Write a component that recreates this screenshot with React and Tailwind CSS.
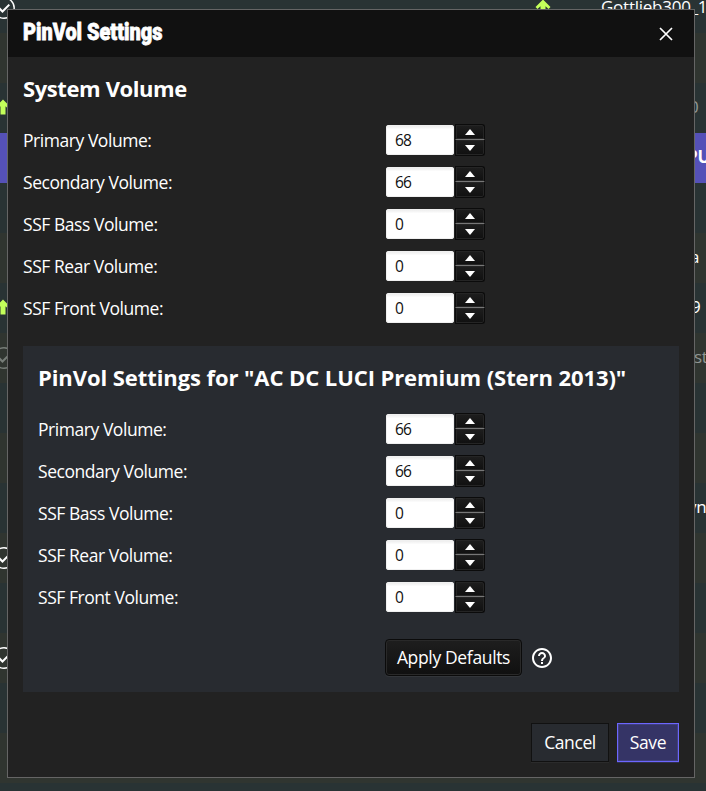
import React from 'react';

const UI = "font-['Open_Sans','Noto_Sans',sans-serif]";

function CheckIcon({ dim }) {
  return (
    <svg viewBox="0 0 24 24" className={`-mt-px h-6 w-6 shrink-0 -ml-2 ${dim ? 'text-[#777d78]' : 'text-white'}`} fill="none" stroke="currentColor">
      <circle cx="12" cy="12" r="10.2" strokeWidth="1.4" />
      <path d="M7 12l3.5 3.5L17.3 8.6" strokeWidth="2" />
    </svg>
  );
}

function ArrowIcon() {
  return (
    <svg viewBox="0 0 16 16" className="-mt-[2px] h-4 w-4 shrink-0 text-[#c4ff5a]" fill="currentColor">
      <path d="M8 0.5L15.5 8 13.5 10 10.5 7.2V15.5H5.5V7.2L2.5 10 0.5 8z" />
    </svg>
  );
}

const rows = [
  { bg: 'bg-[#293334]', icon: 'check', text: 'Gottlieb300_1', indent: 'pl-[601px]', arrow: true },
  { bg: 'bg-[#303530]' },
  { bg: 'bg-[#293334]', icon: 'arrow', text: '0', indent: 'pl-[689px]', dim: true },
  { bg: 'bg-[#5551b8]', text: 'PU', indent: 'pl-[687px]', bold: true },
  { bg: 'bg-[#293334]' },
  { bg: 'bg-[#303530]', text: 'a', indent: 'pl-[690px]' },
  { bg: 'bg-[#293334]', icon: 'arrow', text: '9', indent: 'pl-[691px]' },
  { bg: 'bg-[#303530]', icon: 'check', dim: true, text: 'st', indent: 'pl-[694px]' },
  { bg: 'bg-[#293334]' },
  { bg: 'bg-[#303530]' },
  { bg: 'bg-[#293334]', text: 'yn', indent: 'pl-[688px]' },
  { bg: 'bg-[#303530]', icon: 'check' },
  { bg: 'bg-[#293334]' },
  { bg: 'bg-[#303530]', icon: 'check' },
  { bg: 'bg-[#293334]' },
  { bg: 'bg-[#303530]' },
  { bg: 'bg-[#293334]' },
];

function TableRow({ row }) {
  return (
    <div className={`grid h-[50px] shrink-0 items-center overflow-hidden ${row.bg}`}>
      <div className="col-start-1 row-start-1 flex items-center">
        {row.icon === 'check' && <CheckIcon dim={row.dim} />}
        {row.icon === 'arrow' && <span className="-ml-[5px]"><ArrowIcon /></span>}
        {row.arrow && <span className="ml-[519px]"><ArrowIcon /></span>}
      </div>
      {row.text && (
        <span className={`col-start-1 row-start-1 mb-1 whitespace-nowrap text-[17px] leading-none tracking-[-0.25px] ${row.indent} ${row.bold ? 'font-bold' : ''} ${row.dim ? 'text-[#929794]' : 'text-white'}`}>
          {row.text}
        </span>
      )}
    </div>
  );
}

function StepButton({ down }) {
  return (
    <button className={`flex h-4 w-[30px] items-center justify-center border border-[#0b0b0b] bg-linear-to-b from-[#1e1e1e] to-[#101010] shadow-[inset_0_0_0_1px_#252525] ${down ? 'rounded-br-[3px] border-t-0' : 'rounded-tr-[3px] border-b-[#777]'}`}>
      <svg viewBox="0 0 10 6" className="h-[6px] w-[10px]" fill="#fff">
        {down ? <path d="M0 0H10L5 6z" /> : <path d="M5 0L10 6H0z" />}
      </svg>
    </button>
  );
}

function Spinner({ value }) {
  return (
    <div className="flex h-8 w-[99px] items-center">
      <div className="flex h-[30px] w-[68px] shrink-0 items-center rounded-[3px] bg-linear-to-b from-[#e9e9e9] via-white via-15% to-white pt-[2px] pl-[9px] text-[15.5px] tracking-[-0.9px] text-[#111] shadow-[inset_0_0_0_1px_#f0f0f0]">
        {value}
      </div>
      <div className="ml-px flex flex-col">
        <StepButton />
        <StepButton down />
      </div>
    </div>
  );
}

const names = ['Primary Volume:', 'Secondary Volume:', 'SSF Bass Volume:', 'SSF Rear Volume:', 'SSF Front Volume:'];

function Fields({ values, labelWidth }) {
  return names.map((name, i) => (
    <div key={name} className="flex h-[42px] items-center">
      <label className={`shrink-0 text-[17.5px] tracking-[-0.45px] ${labelWidth}`}>{name}</label>
      <Spinner value={values[i]} />
    </div>
  ));
}

function Dialog() {
  return (
    <section className="absolute left-[7px] top-[9px] flex h-[769px] w-[688px] flex-col border border-[#656565] bg-[#222] text-white">
      <header className="flex h-[47px] shrink-0 items-center justify-between bg-[#111] pl-[15px] pr-[21px]">
        <h1 className="-mt-[3px] w-[180px] origin-left scale-x-[.83] whitespace-nowrap font-[Roboto,sans-serif] text-[24px] font-black leading-none [-webkit-text-stroke:0.8px_white]">PinVol Settings</h1>
        <svg viewBox="0 0 14 14" className="h-[14px] w-[14px]" stroke="#fff" strokeWidth="1.7"><path d="M1 1l12 12M13 1L1 13" /></svg>
      </header>
      <main className="flex flex-1 flex-col px-[15px]">
        <h2 className="mb-[15px] mt-[15px] whitespace-nowrap text-[22px] font-bold leading-[32px] tracking-[-0.4px]">System Volume</h2>
        <Fields values={[68, 66, 0, 0, 0]} labelWidth="w-[363px]" />
        <div className="mt-[17px] h-[346px] w-[656px] shrink-0 bg-[#282b30] pl-[15px]">
          <h2 className="mb-[15px] mt-[15px] whitespace-nowrap text-[22px] font-bold leading-[32px] tracking-[-0.08px]">PinVol Settings for "AC DC LUCI Premium (Stern 2013)"</h2>
          <Fields values={[66, 66, 0, 0, 0]} labelWidth="w-[348px]" />
          <div className="ml-[347px] mt-[21px] flex items-center gap-[8px]">
            <button className="h-[37px] w-[137px] whitespace-nowrap rounded-[4px] border border-[#0b0b0b] bg-linear-to-b from-[#1e1e1e] to-[#101010] text-[17.5px] leading-none tracking-[-0.35px] shadow-[inset_0_0_0_1px_#292929,0_1px_0_#33363a]">Apply Defaults</button>
            <svg viewBox="0 0 24 24" className="-ml-[0.5px] h-6 w-6" fill="#fff">
              <path d="M11 18h2v-2h-2v2zm1-16C6.48 2 2 6.48 2 12s4.48 10 10 10 10-4.480 10-10S17.520 2 12 2zm0 18c-4.410 0-8-3.590-8-8s3.590-8 8-8 8 3.590 8 8-3.590 8-8 8zm0-14c-2.210 0-4 1.790-4 4h2c0-1.100.900-2 2-2s2 .900 2 2c0 2-3 1.750-3 5h2c0-2.250 3-2.500 3-5 0-2.210-1.790-4-4-4z" />
            </svg>
          </div>
        </div>
        <footer className="mt-[31px] flex justify-end gap-2">
          <button className="h-[39px] w-[78px] border border-[#111] bg-[#282b30] text-[17.5px] leading-none tracking-[-0.4px] shadow-[0_1px_0_#2b2b2b]">Cancel</button>
          <button className="h-[39px] w-[62px] border border-[#6c66ff] bg-[#353466] text-[17.5px] leading-none tracking-[-0.4px] shadow-[inset_0_0_0_1px_#414080,0_1px_0_#30304d]">Save</button>
        </footer>
      </main>
    </section>
  );
}

export default function App() {
  return (
    <div className={`relative h-[791px] w-[706px] overflow-hidden bg-[#293334] ${UI}`}>
      <div className="-mt-[17px] flex flex-col">
        {rows.map((row, i) => <TableRow key={i} row={row} />)}
      </div>
      <Dialog />
    </div>
  );
}
